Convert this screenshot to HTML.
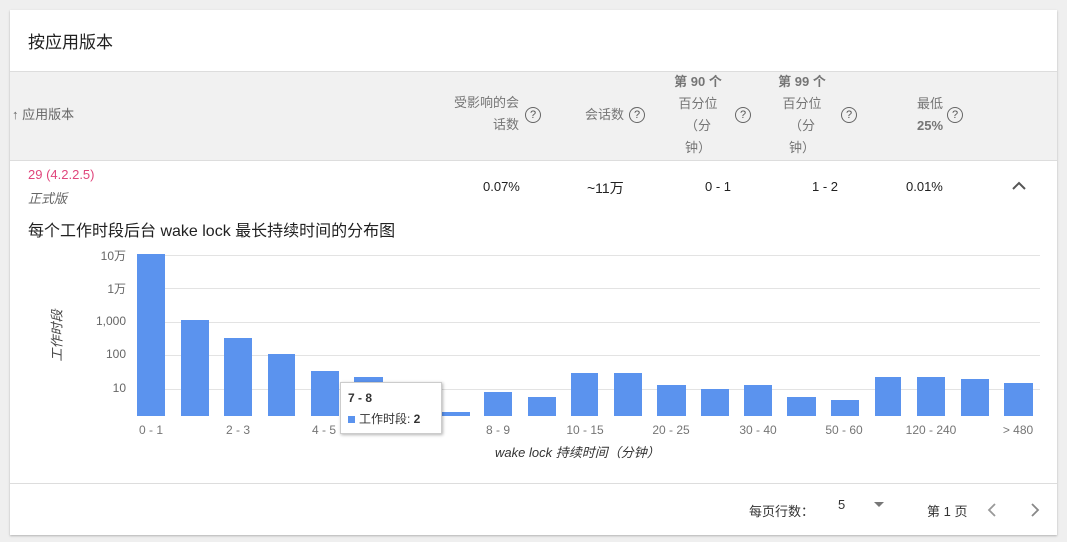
<!DOCTYPE html>
<html><head><meta charset="utf-8"><style>
body{margin:0;width:1067px;height:542px;background:#efefef;font-family:"Liberation Sans","Noto Sans CJK SC",sans-serif;position:relative;overflow:hidden;color:#212121}
.card{position:absolute;left:10px;top:10px;width:1047px;height:525px;background:#fff;box-shadow:0 1px 2px rgba(0,0,0,.25)}
.a{position:absolute;white-space:nowrap}
.h{font-size:13px;color:#757575;line-height:22px}
.q{position:absolute;width:14px;height:14px;border:1.3px solid #666;border-radius:50%;font-size:11px;line-height:14px;text-align:center;color:#555}
.d{font-size:13px;color:#212121}
.g{position:absolute;left:127px;width:903px;height:1px;background:#e3e3e3}
.b{position:absolute;background:#5b93ee}
.yl{position:absolute;width:40px;text-align:right;font-size:12px;color:#666;left:76px}
.xl{position:absolute;font-size:12px;color:#757575;top:413px;width:60px;text-align:center}
</style></head><body>
<div class="card">
<div class="a" style="left:18px;top:18px;font-size:17px;color:#212121">按应用版本</div>
<div class="a" style="left:0;top:61px;width:1047px;height:88px;background:#f1f1f1;border-top:1px solid #ddd;border-bottom:1px solid #ddd"></div>
<div class="a h" style="left:2px;top:94px;color:#666">↑ 应用版本</div>
<div class="a h" style="left:440px;top:82px;text-align:right;width:69px">受影响的会<br>话数</div>
<div class="q" style="left:515px;top:97px">?</div>
<div class="a h" style="left:575px;top:94px">会话数</div>
<div class="q" style="left:619px;top:97px">?</div>
<div class="a h" style="left:660px;top:61px;width:56px;text-align:center;font-weight:bold">第 90 个</div>
<div class="a h" style="left:660px;top:83px;width:56px;text-align:center">百分位<br>（分<br>钟）</div>
<div class="q" style="left:725px;top:97px">?</div>
<div class="a h" style="left:764px;top:61px;width:56px;text-align:center;font-weight:bold">第 99 个</div>
<div class="a h" style="left:764px;top:83px;width:56px;text-align:center">百分位<br>（分<br>钟）</div>
<div class="q" style="left:831px;top:97px">?</div>
<div class="a h" style="left:898px;top:83px;width:44px;text-align:center">最低<br><b>25%</b></div>
<div class="q" style="left:937px;top:97px">?</div>
<div class="a" style="left:18px;top:157px;font-size:13px;color:#e0467c">29 (4.2.2.5)</div>
<div class="a" style="left:18px;top:178px;font-size:13px;color:#666;font-style:italic">正式版</div>
<div class="a d" style="left:473px;top:169px">0.07%</div>
<div class="a d" style="left:577px;top:168px;font-size:14px">~11万</div>
<div class="a d" style="left:695px;top:169px">0 - 1</div>
<div class="a d" style="left:802px;top:169px">1 - 2</div>
<div class="a d" style="left:896px;top:169px">0.01%</div>
<svg class="a" style="left:1001px;top:170px" width="16" height="12"><path d="M2 9L8 3L14 9" stroke="#555" stroke-width="2" fill="none"/></svg>
<div class="a" style="left:18px;top:207px;font-size:16px;color:#212121">每个工作时段后台 wake lock 最长持续时间的分布图</div>
<div class="g" style="top:245px"></div><div class="g" style="top:278px"></div><div class="g" style="top:312px"></div><div class="g" style="top:345px"></div><div class="g" style="top:379px"></div>
<div class="yl" style="top:237px">10万</div><div class="yl" style="top:270px">1万</div><div class="yl" style="top:304px">1,000</div><div class="yl" style="top:337px">100</div><div class="yl" style="top:371px">10</div>
<div class="a" style="left:20px;top:316px;font-size:13px;color:#444;font-style:italic;transform:rotate(-90deg)">工作时段</div>
<div class="b" style="left:127px;top:244px;width:28px;height:162px"></div>
<div class="b" style="left:171px;top:310px;width:28px;height:96px"></div>
<div class="b" style="left:214px;top:328px;width:28px;height:78px"></div>
<div class="b" style="left:258px;top:344px;width:27px;height:62px"></div>
<div class="b" style="left:301px;top:361px;width:28px;height:45px"></div>
<div class="b" style="left:344px;top:367px;width:29px;height:39px"></div>
<div class="b" style="left:420px;top:402px;width:40px;height:4px"></div>
<div class="b" style="left:474px;top:382px;width:28px;height:24px"></div>
<div class="b" style="left:518px;top:387px;width:28px;height:19px"></div>
<div class="b" style="left:561px;top:363px;width:27px;height:43px"></div>
<div class="b" style="left:604px;top:363px;width:28px;height:43px"></div>
<div class="b" style="left:647px;top:375px;width:29px;height:31px"></div>
<div class="b" style="left:691px;top:379px;width:28px;height:27px"></div>
<div class="b" style="left:734px;top:375px;width:28px;height:31px"></div>
<div class="b" style="left:777px;top:387px;width:29px;height:19px"></div>
<div class="b" style="left:821px;top:390px;width:28px;height:16px"></div>
<div class="b" style="left:865px;top:367px;width:26px;height:39px"></div>
<div class="b" style="left:907px;top:367px;width:28px;height:39px"></div>
<div class="b" style="left:951px;top:369px;width:28px;height:37px"></div>
<div class="b" style="left:994px;top:373px;width:29px;height:33px"></div>
<div class="xl" style="left:111px">0 - 1</div><div class="xl" style="left:198px">2 - 3</div><div class="xl" style="left:284px">4 - 5</div><div class="xl" style="left:371px">6 - 7</div><div class="xl" style="left:458px">8 - 9</div><div class="xl" style="left:545px">10 - 15</div><div class="xl" style="left:631px">20 - 25</div><div class="xl" style="left:718px">30 - 40</div><div class="xl" style="left:804px">50 - 60</div><div class="xl" style="left:891px">120 - 240</div><div class="xl" style="left:978px">&gt; 480</div>
<div class="a" style="left:485px;top:432px;font-size:13px;color:#333;font-style:italic">wake lock 持续时间（分钟）</div>
<div class="a" style="left:330px;top:372px;width:100px;height:50px;background:#fff;border:1px solid #ccc;box-shadow:1px 1px 3px rgba(0,0,0,.3);font-size:12px;color:#333">
<div style="position:absolute;left:7px;top:8px;font-weight:bold">7 - 8</div>
<div style="position:absolute;left:7px;top:27px"><span style="display:inline-block;width:7px;height:7px;background:#5b93ee;margin-right:4px"></span>工作时段: <b>2</b></div></div>
<div class="a" style="left:0;top:473px;width:1047px;height:1px;background:#ddd"></div>
<div class="a" style="left:739px;top:491px;font-size:13px;color:#333">每页行数：</div>
<div class="a" style="left:828px;top:487px;font-size:13px;color:#333">5</div>
<div class="a" style="left:864px;top:492px;width:0;height:0;border-left:5px solid transparent;border-right:5px solid transparent;border-top:5px solid #777"></div>
<div class="a" style="left:917px;top:491px;font-size:13px;color:#333">第 1 页</div>
<svg class="a" style="left:976px;top:492px" width="12" height="16"><path d="M9 2L3 8L9 14" stroke="#999" stroke-width="1.8" fill="none"/></svg>
<svg class="a" style="left:1019px;top:492px" width="12" height="16"><path d="M3 2L9 8L3 14" stroke="#888" stroke-width="1.8" fill="none"/></svg>
</div>
</body></html>
